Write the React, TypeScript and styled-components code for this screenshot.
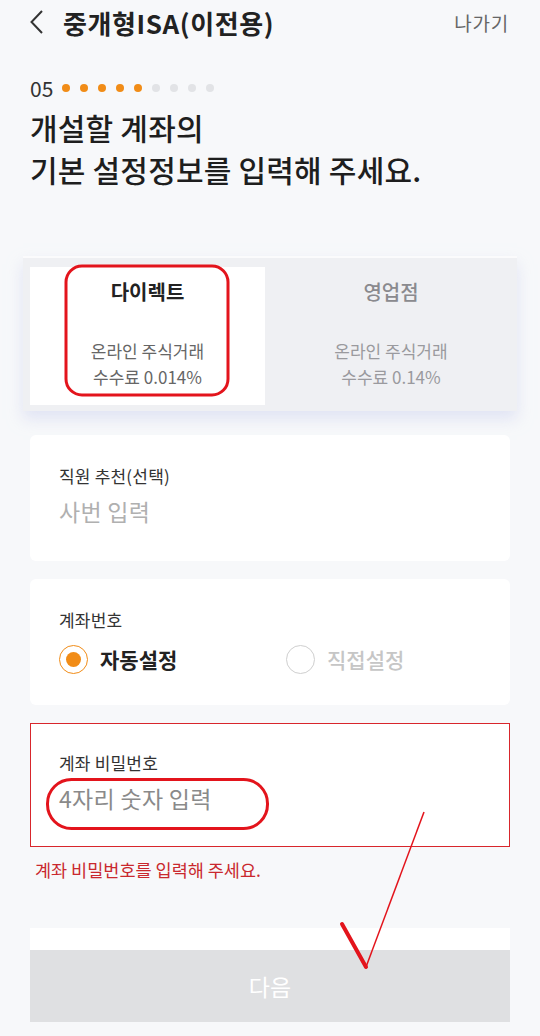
import React from "react";
import styled, { createGlobalStyle } from "styled-components";

const Global = createGlobalStyle`
  html, body { margin: 0; padding: 0; background: #f7f8fa; }
  body { font-family: "Noto Sans CJK KR", "Noto Sans", sans-serif; }
  * { box-sizing: border-box; }
`;

const Page = styled.div`
  position: relative;
  width: 540px;
  height: 1036px;
  overflow: hidden;
  background: #f7f8fa;
  padding: 0 30px;
  display: flex;
  flex-direction: column;
`;

const Header = styled.div`
  height: 44px;
  display: flex;
  align-items: center;
  justify-content: space-between;
`;

const TitleWrap = styled.div`
  display: flex;
  align-items: center;
  gap: 20px;
`;

const Title = styled.h1`
  margin: 0;
  font-size: 26px;
  font-weight: 700;
  color: #222;
  letter-spacing: 0.6px;
`;

const Exit = styled.span`
  font-size: 19px;
  color: #666;
  letter-spacing: 0.8px;
  margin-right: 1px;
`;

const Progress = styled.div`
  margin-top: 32px;
  display: flex;
  align-items: center;
  height: 24px;
`;

const StepNum = styled.span`
  font-size: 21px;
  color: #333;
  margin-right: 9px;
`;

const Dot = styled.span<{ $on: boolean }>`
  width: 8px;
  height: 8px;
  border-radius: 50%;
  background: ${(p) => (p.$on ? "#f18c17" : "#e2e3e6")};
  margin-right: 10px;
`;

const Heading = styled.h2`
  margin: 6px 0 0;
  font-size: 30px;
  line-height: 42px;
  font-weight: 500;
  color: #1e1e1e;
  letter-spacing: 0.2px;
`;

const Segment = styled.div`
  margin: 66px -7px 0;
  padding: 9px 0 6px 7px;
  background: #eff0f3;
  display: grid;
  grid-template-columns: 235px 1fr;
  box-shadow: 0 8px 14px rgba(210, 215, 240, 0.6);
  border-top: 2px solid #fbfbfc;
`;

const Option = styled.div<{ $on: boolean }>`
  background: ${(p) => (p.$on ? "#ffffff" : "transparent")};
  height: 138px;
  display: flex;
  flex-direction: column;
  align-items: center;
  padding-top: 10px;
`;

const OptTitle = styled.div<{ $on: boolean }>`
  font-size: 20px;
  font-weight: ${(p) => (p.$on ? 700 : 500)};
  color: ${(p) => (p.$on ? "#222" : "#8a8a8e")};
  height: 30px;
  line-height: 30px;
`;

const OptSub = styled.div<{ $on: boolean }>`
  margin-top: 31px;
  font-size: 17px;
  line-height: 26px;
  text-align: center;
  color: ${(p) => (p.$on ? "#666" : "#9a9a9e")};
`;

const Card = styled.div<{ $error?: boolean }>`
  background: #fff;
  border-radius: ${(p) => (p.$error ? "0" : "6px")};
  border: ${(p) => (p.$error ? "1.5px solid #d8262c" : "none")};
  height: ${(p) => (p.$error ? "124px" : "126px")};
  padding: ${(p) => (p.$error ? "28px 0 0 28px" : "30px 0 0 29px")};
  margin-top: 18px;
`;

const FirstCard = styled(Card)`
  margin-top: 24px;
`;

const Label = styled.div`
  font-size: 17px;
  line-height: 22px;
  color: #333;
  letter-spacing: 0.2px;
`;

const Placeholder = styled.div<{ $dark?: boolean }>`
  margin-top: 9px;
  font-size: 23px;
  line-height: 30px;
  letter-spacing: 0.3px;
  color: ${(p) => (p.$dark ? "#8a8a8a" : "#b0b0b0")};
`;

const RadioRow = styled.div`
  margin-top: 13px;
  display: grid;
  grid-template-columns: 227px 1fr;
`;

const Radio = styled.label`
  display: flex;
  align-items: center;
  gap: 12px;
`;

const Circle = styled.span<{ $on: boolean }>`
  width: 29px;
  height: 29px;
  border-radius: 50%;
  border: 1.5px solid ${(p) => (p.$on ? "#f18c17" : "#cfcfcf")};
  display: flex;
  align-items: center;
  justify-content: center;
  &::after {
    content: "";
    width: 15px;
    height: 15px;
    border-radius: 50%;
    background: ${(p) => (p.$on ? "#f18c17" : "transparent")};
  }
`;

const RadioText = styled.span<{ $on: boolean }>`
  font-size: 21px;
  font-weight: ${(p) => (p.$on ? 700 : 500)};
  color: ${(p) => (p.$on ? "#222" : "#c6c6c6")};
`;

const ErrorText = styled.div`
  margin: 10px 0 0 5px;
  font-size: 17.5px;
  line-height: 26px;
  color: #c9282e;
`;

const Footer = styled.div`
  margin-top: 45px;
  display: flex;
  flex-direction: column;
`;

const Strip = styled.div`
  height: 22px;
  background: #fff;
`;

const NextButton = styled.button`
  height: 72px;
  border: none;
  background: #dfe0e2;
  color: #fff;
  font-family: inherit;
  font-size: 23px;
  padding: 0;
`;

const Overlay = styled.svg`
  position: absolute;
  left: 0;
  top: 0;
  pointer-events: none;
`;

export default function App() {
  return (
    <>
      <Global />
      <Page>
        <Header>
          <TitleWrap>
            <svg width="13" height="24" viewBox="0 0 13 24">
              <path d="M12 1 L1.5 12 L12 23" fill="none" stroke="#333" strokeWidth="2" />
            </svg>
            <Title>중개형ISA(이전용)</Title>
          </TitleWrap>
          <Exit>나가기</Exit>
        </Header>
        <Progress>
          <StepNum>05</StepNum>
          {Array.from({ length: 9 }).map((_, i) => (
            <Dot key={i} $on={i < 5} />
          ))}
        </Progress>
        <Heading>
          개설할 계좌의
          <br />
          기본 설정정보를 입력해 주세요.
        </Heading>

        <Segment>
          <Option $on>
            <OptTitle $on>다이렉트</OptTitle>
            <OptSub $on>
              온라인 주식거래
              <br />
              수수료 0.014%
            </OptSub>
          </Option>
          <Option $on={false}>
            <OptTitle $on={false}>영업점</OptTitle>
            <OptSub $on={false}>
              온라인 주식거래
              <br />
              수수료 0.14%
            </OptSub>
          </Option>
        </Segment>

        <FirstCard>
          <Label>직원 추천(선택)</Label>
          <Placeholder>사번 입력</Placeholder>
        </FirstCard>

        <Card>
          <Label>계좌번호</Label>
          <RadioRow>
            <Radio>
              <Circle $on />
              <RadioText $on>자동설정</RadioText>
            </Radio>
            <Radio>
              <Circle $on={false} />
              <RadioText $on={false}>직접설정</RadioText>
            </Radio>
          </RadioRow>
        </Card>

        <Card $error>
          <Label>계좌 비밀번호</Label>
          <Placeholder $dark>4자리 숫자 입력</Placeholder>
        </Card>
        <ErrorText>계좌 비밀번호를 입력해 주세요.</ErrorText>

        <Footer>
          <Strip />
          <NextButton>다음</NextButton>
        </Footer>

        <Overlay width="540" height="1036" viewBox="0 0 540 1036">
          <rect x="66" y="266" width="162" height="129" rx="16" fill="none" stroke="#e3141c" strokeWidth="3" />
          <rect x="47.5" y="779.5" width="220" height="49" rx="24" fill="none" stroke="#e3141c" strokeWidth="3" />
          <line x1="342" y1="924" x2="366" y2="967" stroke="#e3141c" strokeWidth="4" strokeLinecap="round" />
          <line x1="366" y1="967" x2="424" y2="812" stroke="#e3141c" strokeWidth="1.5" />
        </Overlay>
      </Page>
    </>
  );
}
